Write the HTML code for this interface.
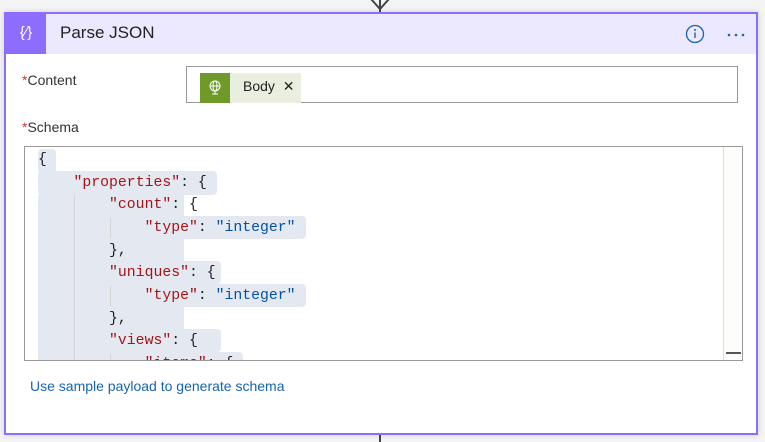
<!DOCTYPE html>
<html><head><meta charset="utf-8"><style>
*{margin:0;padding:0;box-sizing:border-box}
body{width:765px;height:442px;background:#f4f4f4;position:relative;overflow:hidden;font-family:"Segoe UI","Liberation Sans",sans-serif}
.card{position:absolute;left:4px;top:12px;width:754px;height:423px;border:2px solid #8c6dfd;background:#fff;box-shadow:0 0 6px rgba(0,0,0,.15)}
.hdr{position:absolute;left:0;top:0;right:0;height:40px;background:#ece8fd}
.ico{position:absolute;left:0;top:0;width:40px;height:40px;background:#8c6dfd;color:#fff;font-size:15px;text-align:center;line-height:38px}
.title{position:absolute;left:54px;top:9px;font-size:17px;color:#222}
.lbl{position:absolute;font-size:14px;color:#333}
.lbl b{color:#d13438;font-weight:normal}
.inp{position:absolute;left:180px;top:52px;width:552px;height:37px;border:1px solid #999}
.tok{position:absolute;left:194px;top:59px;width:101px;height:30px;background:#e9eedf}
.tok .g{position:absolute;left:0;top:0;width:30px;height:30px;background:#6f9a2a}
.tok span{position:absolute;left:43px;top:5px;font-size:14px;color:#222}
.ed{position:absolute;left:18px;top:132px;width:719px;height:215px;border:1px solid #999;overflow:hidden;font-family:"Liberation Mono",monospace;font-size:14.8px}
.sb{position:absolute;right:0;top:0;width:19px;height:100%;border-left:1px solid #ddd;background:#fdfdfc}
.sb i{position:absolute;left:2px;bottom:6px;width:15px;height:2px;background:#555}
.ln{position:absolute;left:13px;height:23px;line-height:23px;white-space:pre;color:#222}
.hl{position:absolute;background:#e4e9f1;border-radius:4px}
.k{color:#a31515}.s{color:#0451a5}
.gd{position:absolute;width:1px;background:#d4d4d4}
.link{position:absolute;left:24px;top:364px;font-size:14px;color:#1764b0}
</style></head><body>
<div style="position:absolute;left:379px;top:0;width:2px;height:12px;background:#444"></div>
<svg style="position:absolute;left:368px;top:0" width="24" height="12"><polyline points="3,-1 12,9 21,-1" fill="none" stroke="#444" stroke-width="2"/></svg>
<div style="position:absolute;left:379px;top:434px;width:2px;height:8px;background:#444"></div>
<div class="card">
<div class="hdr"><div class="ico">{&#x2215;}</div><div class="title">Parse JSON</div>
<svg style="position:absolute;left:679px;top:10px" width="20" height="20"><circle cx="10" cy="10" r="8.5" fill="none" stroke="#1764b0" stroke-width="1.3"/><line x1="10" y1="8.5" x2="10" y2="14" stroke="#1764b0" stroke-width="1.4"/><circle cx="10" cy="6" r="1" fill="#1764b0"/></svg>
<svg style="position:absolute;left:720px;top:18px" width="22" height="6"><circle cx="3" cy="3" r="1.3" fill="#1764b0"/><circle cx="10" cy="3" r="1.3" fill="#1764b0"/><circle cx="17" cy="3" r="1.3" fill="#1764b0"/></svg>
</div>
<div class="lbl" style="left:16px;top:58px"><b>*</b>Content</div>
<div class="inp"></div>
<div class="tok"><div class="g"><svg width="30" height="30"><circle cx="15" cy="13" r="5" fill="none" stroke="#fff" stroke-width="1"/><line x1="10" y1="13" x2="20" y2="13" stroke="#fff"/><ellipse cx="15" cy="13" rx="2" ry="5" fill="none" stroke="#fff"/><line x1="15" y1="18" x2="15" y2="21" stroke="#fff"/><line x1="12" y1="21" x2="18" y2="21" stroke="#fff"/></svg></div><span>Body &nbsp;✕</span></div>
<div class="lbl" style="left:16px;top:105px"><b>*</b>Schema</div>
<div class="ed">
<div class="hl" style="left:13px;top:2px;width:18px;height:25px"></div>
<div class="hl" style="left:13px;top:24px;width:179px;height:24px"></div>
<div class="hl" style="left:13px;top:46px;width:146px;height:190px"></div>
<div class="hl" style="left:13px;top:69px;width:268px;height:23px"></div>
<div class="hl" style="left:13px;top:137px;width:268px;height:23px"></div>
<div class="hl" style="left:13px;top:114px;width:183px;height:23px"></div>
<div class="hl" style="left:13px;top:182px;width:183px;height:23px"></div>
<div class="hl" style="left:13px;top:205px;width:205px;height:23px"></div>
<div class="hl" style="left:13px;top:92px;width:100px;height:23px"></div>
<div class="hl" style="left:13px;top:160px;width:100px;height:23px"></div>
<div class="gd" style="left:49px;top:48px;height:170px"></div>
<div class="gd" style="left:85px;top:71px;height:20px"></div>
<div class="gd" style="left:85px;top:139px;height:20px"></div>
<div class="gd" style="left:85px;top:207px;height:20px"></div>
<div class="ln" style="top:2px">{</div>
<div class="ln" style="top:25px">    <span class="k">"properties"</span>: {</div>
<div class="ln" style="top:47px">        <span class="k">"count"</span>: {</div>
<div class="ln" style="top:70px">            <span class="k">"type"</span>: <span class="s">"integer"</span></div>
<div class="ln" style="top:93px">        },</div>
<div class="ln" style="top:115px">        <span class="k">"uniques"</span>: {</div>
<div class="ln" style="top:138px">            <span class="k">"type"</span>: <span class="s">"integer"</span></div>
<div class="ln" style="top:161px">        },</div>
<div class="ln" style="top:183px">        <span class="k">"views"</span>: {</div>
<div class="ln" style="top:206px">            <span class="k">"items"</span>: {</div>
<div class="sb"><i></i></div>
</div>
<div class="link">Use sample payload to generate schema</div>
</div>
</body></html>
